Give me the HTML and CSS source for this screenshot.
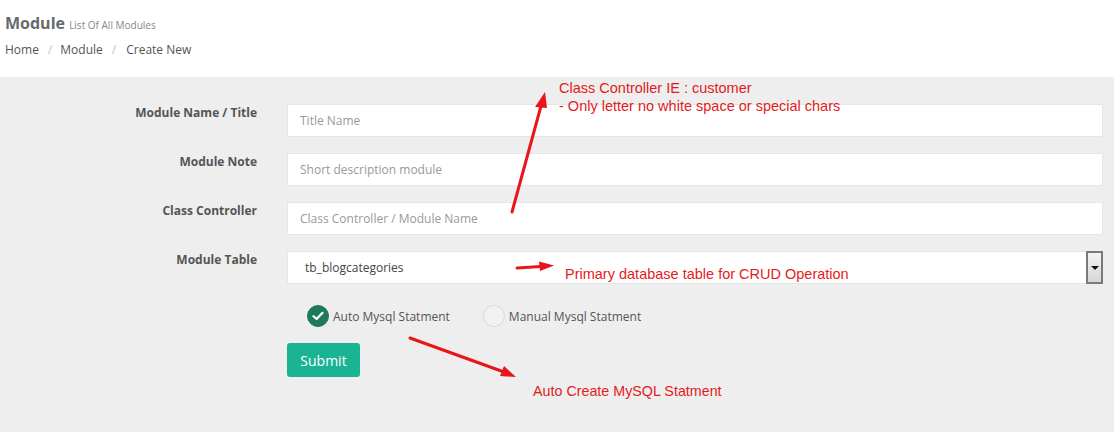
FILE: index.html
```html
<!DOCTYPE html>
<html>
<head>
<meta charset="utf-8">
<link rel="stylesheet" href="styles.css">
</head>
<body>
<div class="page">
  <header class="page-head">
    <h1 class="title">Module <small class="subtitle">List Of All Modules</small></h1>
    <nav class="crumbs">
      <span>Home</span><span class="sep">/</span><span>Module</span><span class="sep">/</span><span class="current">Create New</span>
    </nav>
  </header>
  <main class="content">
    <form class="form">
      <div class="row">
        <label class="label">Module Name / Title</label>
        <div class="field"><div class="input placeholder">Title Name</div></div>
      </div>
      <div class="row">
        <label class="label">Module Note</label>
        <div class="field"><div class="input placeholder">Short description module</div></div>
      </div>
      <div class="row">
        <label class="label">Class Controller</label>
        <div class="field"><div class="input placeholder">Class Controller / Module Name</div></div>
      </div>
      <div class="row">
        <label class="label">Module Table</label>
        <div class="field">
          <div class="input select"><span class="value">tb_blogcategories</span><span class="drop"><span class="tri"></span></span></div>
        </div>
      </div>
      <div class="row radios-row">
        <div class="label"></div>
        <div class="field radios">
          <span class="radio"><span class="dot checked"><svg width="12" height="10" viewBox="0 0 12 10"><path d="M1.5 5.2 L4.6 8 L10.5 1.8" fill="none" stroke="#fff" stroke-width="2.2" stroke-linecap="round" stroke-linejoin="round"/></svg></span>Auto Mysql Statment</span>
          <span class="radio"><span class="dot"></span>Manual Mysql Statment</span>
        </div>
      </div>
      <div class="row">
        <div class="label"></div>
        <div class="field"><button type="button" class="btn">Submit</button></div>
      </div>
    </form>
  </main>
  <svg class="arrows" width="1114" height="432" viewBox="0 0 1114 432">
    <g stroke="#e8161b" stroke-width="3" fill="#e8161b" stroke-linecap="round">
      <line x1="512" y1="212" x2="541" y2="106"/>
      <polygon points="545,92 535,107 547,108" stroke="none"/>
      <line x1="517" y1="268" x2="541" y2="266.5"/>
      <polygon points="554,265.5 539,261.5 540,271" stroke="none"/>
      <line x1="410" y1="338" x2="504" y2="372"/>
      <polygon points="516,377 504,366 500,376" stroke="none"/>
    </g>
  </svg>
  <div class="note note1">Class Controller IE : customer<br>- Only letter no white space or special chars</div>
  <div class="note note2">Primary database table for CRUD Operation</div>
  <div class="note note3">Auto Create MySQL Statment</div>
</div>
</body>
</html>
```
FILE: styles.css
```css
* { box-sizing: border-box; }
html, body { margin: 0; padding: 0; }
body {
  width: 1114px;
  height: 432px;
  overflow: hidden;
  font-family: "Open Sans", sans-serif;
  background: #eeeeee;
}
.page { position: relative; width: 1114px; height: 432px; }
.page-head {
  background: #fff;
  height: 77px;
  padding: 12px 0 0 5px;
}
.title {
  margin: 0;
  font-size: 16px;
  font-weight: 700;
  color: #676a6c;
  line-height: 22px;
}
.subtitle {
  font-size: 10px;
  font-weight: 400;
  color: #888;
}
.crumbs {
  margin-top: 4px;
  font-size: 12px;
  color: #555;
  line-height: 20px;
}
.crumbs .sep { color: #c4c4c4; padding: 0 8px 0 9px; }
.crumbs .current { color: #555; margin-left: 2px; }
.content { padding: 27px 11px 0 0; }
.form { display: flex; flex-direction: column; gap: 16px; }
.row { display: flex; gap: 30px; }
.label {
  width: 257px;
  flex: none;
  text-align: right;
  font-size: 12px;
  font-weight: 700;
  color: #555;
  padding-top: 0;
  line-height: 17px;
}
.field { flex: 1; }
.input {
  height: 33px;
  background: #fff;
  border: 1px solid #e5e6e7;
  font-size: 12px;
  line-height: 32px;
  padding: 0 12px;
}
.placeholder { color: #999; }
.select {
  display: flex;
  justify-content: space-between;
  align-items: center;
  padding: 0 0 0 17px;
  color: #444;
}
.select .value { line-height: 31px; }
.drop {
  width: 17px;
  height: 33px;
  margin-right: -1px;
  border: 2px solid #7a7a7a;
  background: linear-gradient(#f4f4f4, #d6d6d6);
  display: flex;
  align-items: center;
  justify-content: center;
}
.tri {
  width: 0; height: 0;
  border-left: 4px solid transparent;
  border-right: 4px solid transparent;
  border-top: 4px solid #111;
}
.radios-row { margin-top: 2px; }
.radios {
  display: flex;
  align-items: center;
  gap: 33px;
  padding-left: 20px;
  height: 28px;
}
.radio {
  display: flex;
  align-items: center;
  gap: 4px;
  font-size: 12px;
  color: #555;
}
.dot {
  width: 22px; height: 22px;
  border-radius: 50%;
  border: 1px solid #d9d9d9;
  background: #f2f2f2;
  display: flex;
  align-items: center;
  justify-content: center;
}
.dot.checked { background: #1f7a5c; border-color: #1f7a5c; }
.btn {
  margin-top: -3px;
  width: 73px;
  height: 34px;
  border: none;
  border-radius: 3px;
  background: #1ab394;
  color: #fff;
  font-family: "Open Sans", sans-serif;
  font-size: 14px;
}
.arrows { position: absolute; left: 0; top: 0; pointer-events: none; }
.note {
  position: absolute;
  color: #e31b1b;
  font-family: "Liberation Sans", sans-serif;
  font-size: 14.5px;
  line-height: 18px;
  white-space: nowrap;
}
.note1 { left: 559px; top: 79px; }
.note2 { left: 565px; top: 265px; }
.note3 { left: 533px; top: 382px; font-size: 14.3px; }
```
